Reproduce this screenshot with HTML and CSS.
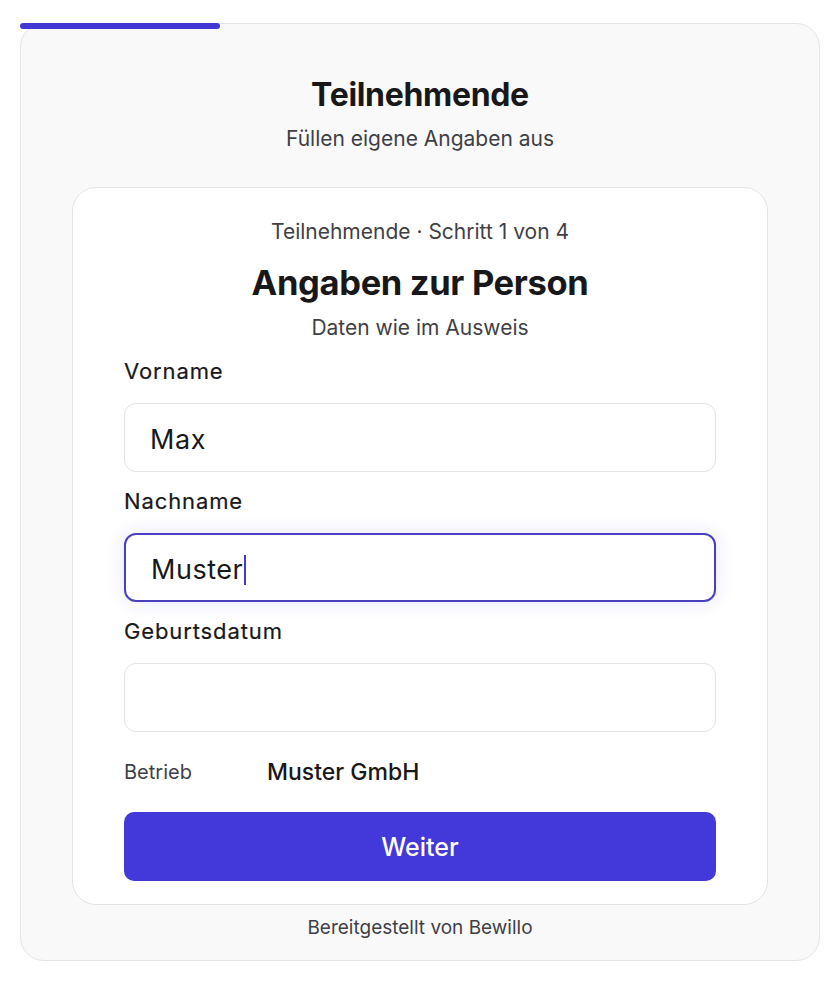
FILE: index.html
```html
<!DOCTYPE html>
<html lang="de">

<head>
    <meta charset="UTF-8">
    <title>Teilnehmende</title>
    <link rel="stylesheet" href="styles.css">
</head>

<body>
    <div class="shell">
        <div class="progress"></div>
        <h1 class="title">Teilnehmende</h1>
        <p class="subtitle">Füllen eigene Angaben aus</p>

        <div class="card">
            <p class="step">Teilnehmende · Schritt 1 von 4</p>
            <h2 class="heading">Angaben zur Person</h2>
            <p class="hint">Daten wie im Ausweis</p>

            <form class="form">
                <div class="field">
                    <label class="label" for="vorname">Vorname</label>
                    <div class="input">Max</div>
                </div>
                <div class="field">
                    <label class="label" for="nachname">Nachname</label>
                    <div class="input input-focus">Muster<span class="caret"></span></div>
                </div>
                <div class="field">
                    <label class="label" for="geburt">Geburtsdatum</label>
                    <div class="input"></div>
                </div>
                <div class="company">
                    <span class="company-key">Betrieb</span>
                    <span class="company-val">Muster GmbH</span>
                </div>
                <button class="btn" type="button">Weiter</button>
            </form>
        </div>

        <p class="footer">Bereitgestellt von Bewillo</p>
    </div>
</body>

</html>
```

FILE: styles.css
```css
* {
    box-sizing: border-box;
}

body {
    margin: 0;
    padding: 23px 20px;
    background: #fff;
    font-family: Inter, "Liberation Sans", sans-serif;
    color: #18181b;
}

p,
h1,
h2 {
    margin: 0;
}

.shell {
    position: relative;
    background: #f9f9fa;
    border: 1.5px solid #e4e4e7;
    border-radius: 24px;
    padding: 53px 51px 20px;
    text-align: center;
}

.progress {
    position: absolute;
    left: -1.5px;
    top: -1.5px;
    width: 200px;
    height: 6px;
    border-radius: 3px;
    background: #4338d4;
}

.title {
    font-size: 32px;
    line-height: 36px;
    font-weight: 700;
    letter-spacing: -0.01em;
}

.subtitle {
    margin-top: 13px;
    font-size: 21px;
    line-height: 26px;
    color: #3f3f46;
}

.card {
    margin-top: 35px;
    background: #fff;
    border: 1.5px solid #e4e4e7;
    border-radius: 24px;
    padding: 32px 51px 23px;
}

.step {
    font-size: 21px;
    line-height: 24px;
    color: #3f3f46;
}

.heading {
    margin-top: 18px;
    font-size: 34.5px;
    line-height: 42px;
    font-weight: 700;
    letter-spacing: -0.01em;
}

.hint {
    margin-top: 11px;
    font-size: 21px;
    line-height: 26px;
    color: #3f3f46;
}

.form {
    margin-top: 17px;
    text-align: left;
}

.field {
    margin-bottom: 16px;
}

.label {
    display: block;
    font-size: 22px;
    line-height: 26px;
    letter-spacing: 0.04em;
    margin-bottom: 19px;
    -webkit-text-stroke: 0.2px #18181b;
}

.input {
    height: 69px;
    border: 1.5px solid #e4e4e7;
    border-radius: 12px;
    background: #fff;
    padding: 4px 25px 0;
    display: flex;
    align-items: center;
    font-size: 27px;
    letter-spacing: 0.02em;
}

.input-focus {
    border: 2px solid #4a40bf;
    box-shadow: 0 0 18px rgba(67, 56, 212, 0.14);
}

.caret {
    display: inline-block;
    width: 2px;
    height: 30px;
    margin-left: 1px;
    background: #4338d4;
}

.company {
    margin-top: 26px;
    display: flex;
    align-items: center;
    height: 28px;
}

.company-key {
    width: 143px;
    font-size: 20px;
    color: #3f3f46;
}

.company-val {
    font-size: 23px;
    font-weight: 500;
}

.btn {
    display: block;
    width: 100%;
    height: 69px;
    margin-top: 26px;
    border: none;
    border-radius: 10px;
    background: #4338d9;
    color: #fff;
    font-family: inherit;
    font-size: 25px;
    font-weight: 500;
    cursor: pointer;
}

.footer {
    margin-top: 11px;
    font-size: 19px;
    line-height: 24px;
    color: #3f3f46;
}
```
